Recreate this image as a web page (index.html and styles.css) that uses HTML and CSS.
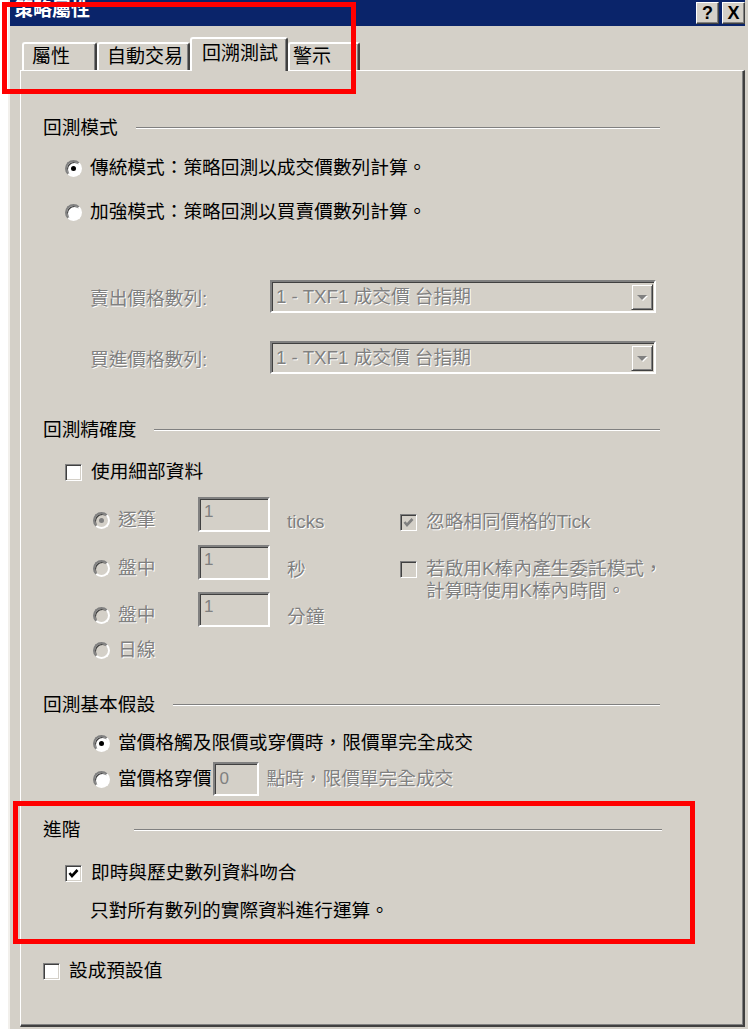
FILE: index.html
```html
<!DOCTYPE html>
<html lang="zh-Hant">
<head>
    <meta charset="UTF-8">
    <title>策略屬性</title>
    <link rel="stylesheet" href="styles.css">
</head>
<body>
    <div class="window">
        <div class="titlebar">
            <span class="title">策略屬性</span>
            <div class="caption-btns">
                <span class="cbtn">?</span>
                <span class="cbtn">X</span>
            </div>
        </div>

        <div class="tabs">
            <div class="tab tab-props">屬性</div>
            <div class="tab tab-auto">自動交易</div>
            <div class="tab tab-back active">回溯測試</div>
            <div class="tab tab-alert">警示</div>
        </div>

        <div class="panel">
            <!-- 回測模式 -->
            <div class="group-head">
                <span class="group-title">回測模式</span>
                <span class="rule"></span>
            </div>
            <div class="row lvl1 mt-16"><span class="radio on"></span><span>傳統模式：策略回測以成交價數列計算。</span></div>
            <div class="row lvl1 mt-20"><span class="radio"></span><span>加強模式：策略回測以買賣價數列計算。</span></div>

            <div class="combo-row mt-56">
                <span class="combo-label off">賣出價格數列:</span>
                <div class="combo"><span class="combo-text">1 - TXF1 成交價 台指期</span><span class="combo-btn"><i></i></span></div>
            </div>
            <div class="combo-row mt-28">
                <span class="combo-label off">買進價格數列:</span>
                <div class="combo"><span class="combo-text">1 - TXF1 成交價 台指期</span><span class="combo-btn"><i></i></span></div>
            </div>

            <!-- 回測精確度 -->
            <div class="group-head mt-44">
                <span class="group-title">回測精確度</span>
                <span class="rule"></span>
            </div>
            <div class="row lvl1 mt-18"><span class="check"></span><span>使用細部資料</span></div>

            <div class="detail mt-13">
                <div class="detail-left">
                    <div class="opt-row">
                        <span class="opt-label off"><span class="radio on disabled"></span>逐筆</span>
                        <span class="field">1</span>
                        <span class="unit off">ticks</span>
                    </div>
                    <div class="opt-row mt-13">
                        <span class="opt-label off"><span class="radio disabled"></span>盤中</span>
                        <span class="field">1</span>
                        <span class="unit off">秒</span>
                    </div>
                    <div class="opt-row mt-12">
                        <span class="opt-label off"><span class="radio disabled"></span>盤中</span>
                        <span class="field">1</span>
                        <span class="unit off">分鐘</span>
                    </div>
                    <div class="row mt-11 off"><span class="radio disabled"></span><span>日線</span></div>
                </div>
                <div class="detail-right">
                    <div class="row off"><span class="check on disabled"><svg viewBox="0 0 13 13"><polyline points="2.5,6 5,9 10.5,3"/></svg></span><span>忽略相同價格的Tick</span></div>
                    <div class="multi off">
                        <span class="check disabled"></span>
                        <span class="multi-text">若啟用K棒內產生委託模式，<br>計算時使用K棒內時間。</span>
                    </div>
                </div>
            </div>

            <!-- 回測基本假設 -->
            <div class="group-head mt-31">
                <span class="group-title">回測基本假設</span>
                <span class="rule"></span>
            </div>
            <div class="row lvl2 mt-14"><span class="radio on"></span><span>當價格觸及限價或穿價時，限價單完全成交</span></div>
            <div class="row tall lvl2 mt-7">
                <span class="radio"></span><span>當價格穿價</span><span class="field small">0</span><span class="off">點時，限價單完全成交</span>
            </div>

            <!-- 進階 -->
            <div class="group-head mt-22">
                <span class="group-title wide">進階</span>
                <span class="rule flush"></span>
            </div>
            <div class="row lvl1 mt-19"><span class="check on"><svg viewBox="0 0 13 13"><polyline points="2.5,6 5,9 10.5,3"/></svg></span><span>即時與歷史數列資料吻合</span></div>
            <div class="row note mt-14">只對所有數列的實際資料進行運算。</div>

            <div class="row mt-36"><span class="check"></span><span>設成預設值</span></div>
        </div>
    </div>

    <div class="mark mark-tabs"></div>
    <div class="mark mark-advanced"></div>
</body>
</html>
```

FILE: styles.css
```css
body {
    margin: 0;
    background: #fff;
    font-family: "Liberation Sans", "Noto Sans CJK TC", sans-serif;
    font-size: 18.7px;
    color: #000;
}
.window {
    width: 740px;
    height: 1029px;
    margin-left: 8px;
    padding-right: 3px;
    box-sizing: border-box;
    background: #d4d0c8;
    border-left: 2px solid #f2f0ec;
    overflow: hidden;
}

/* title bar */
.titlebar {
    height: 26px;
    background: #0a246a;
    display: flex;
    align-items: center;
    justify-content: space-between;
    padding-left: 4px;
}
.title {
    color: #fff;
    font-weight: bold;
    font-size: 19px;
    line-height: 20px;
    margin-top: -6px;
}
.caption-btns {
    display: flex;
    gap: 3px;
}
.cbtn {
    width: 21px;
    height: 20px;
    background: #d4d0c8;
    border: 1px solid;
    border-color: #fff #404040 #404040 #fff;
    box-shadow: inset -1px -1px #808080;
    font-weight: bold;
    font-size: 18px;
    line-height: 20px;
    text-align: center;
}

/* tabs */
.tabs {
    height: 44px;
    display: flex;
    align-items: flex-end;
    padding-left: 12px;
}
.tab {
    height: 28px;
    box-sizing: border-box;
    border-top: 2px solid #fff;
    border-left: 2px solid #fff;
    border-right: 2px solid #404040;
    box-shadow: inset -1px 0 #808080;
    border-radius: 3px 3px 0 0;
    padding-left: 8px;
    font-size: 19px;
    line-height: 26px;
}
.tab-props { width: 75px; }
.tab-auto { width: 93px; }
.tab-back { width: 98px; }
.tab-alert { width: 72px; padding-left: 3px; }
.tab.active {
    height: 34px;
    margin-bottom: -1px;
    position: relative;
    background: #d4d0c8;
    line-height: 30px;
    padding-left: 10px;
}

/* tab page */
.panel {
    margin-left: 10px;
    width: 725px;
    height: 957px;
    box-sizing: border-box;
    border-top: 1px solid #fff;
    border-left: 1px solid #fff;
    border-right: 2px solid #404040;
    border-bottom: 2px solid #404040;
    box-shadow: inset -1px -1px #808080;
    padding: 45px 83px 0 22px;
}
.group-head {
    display: flex;
    align-items: center;
    height: 24px;
    line-height: 24px;
}
.group-title { white-space: nowrap; }
.group-title.wide { min-width: 91px; }
.rule {
    flex: 1;
    margin-left: 18px;
    border-top: 1px solid #808080;
    border-bottom: 1px solid #fff;
}
.rule.flush { margin-left: 0; margin-right: -2px; }

.row {
    display: flex;
    align-items: center;
    height: 24px;
    line-height: 24px;
    white-space: nowrap;
}
.row.tall { height: 34px; }
.lvl1 { padding-left: 22px; }
.lvl2 { padding-left: 50px; }
.note { padding-left: 47px; }

.off {
    color: #808080;
    text-shadow: 1px 1px 0 #fff;
}

/* radio and check boxes */
.radio {
    width: 17px;
    height: 17px;
    box-sizing: border-box;
    flex: none;
    border-radius: 50%;
    border: 2px solid;
    border-color: #808080 #fff #fff #808080;
    background: #fff;
    box-shadow: inset 1px 1px #404040;
    margin-right: 8px;
    position: relative;
}
.radio.on::after {
    content: "";
    position: absolute;
    left: 4px;
    top: 4px;
    width: 5px;
    height: 5px;
    border-radius: 50%;
    background: #000;
}
.radio.disabled { background: #d4d0c8; }
.radio.disabled.on::after { background: #808080; }

.check {
    width: 17px;
    height: 17px;
    box-sizing: border-box;
    flex: none;
    border: 1px solid;
    border-color: #808080 #fff #fff #808080;
    box-shadow: inset 1px 1px #404040, inset -1px -1px #d4d0c8;
    background: #fff;
    margin-right: 9px;
    display: flex;
    align-items: center;
    justify-content: center;
}
.check svg {
    width: 13px;
    height: 13px;
}
.check polyline {
    fill: none;
    stroke: #000;
    stroke-width: 2.6;
}
.check.disabled { background: #d4d0c8; }
.check.disabled polyline { stroke: #808080; }

/* combo boxes */
.combo-row {
    display: flex;
    align-items: center;
    height: 33px;
    padding-left: 47px;
}
.combo-label {
    width: 180px;
    flex: none;
}
.combo {
    width: 386px;
    height: 33px;
    box-sizing: border-box;
    border: 2px solid;
    border-color: #808080 #fff #fff #808080;
    box-shadow: inset 1px 1px #404040;
    display: flex;
    align-items: center;
    justify-content: space-between;
    padding: 2px 1px 1px 4px;
}
.combo-text {
    color: #808080;
    text-shadow: 1px 1px 0 #fff;
    line-height: 24px;
}
.combo-btn {
    width: 22px;
    height: 26px;
    box-sizing: border-box;
    border: 1px solid;
    border-color: #d4d0c8 #404040 #404040 #d4d0c8;
    box-shadow: inset 1px 1px #fff, inset -1px -1px #808080;
    display: flex;
    align-items: center;
    justify-content: center;
}
.combo-btn i {
    width: 0;
    height: 0;
    border-left: 5px solid transparent;
    border-right: 5px solid transparent;
    border-top: 5px solid #808080;
    filter: drop-shadow(1px 1px 0 #fff);
}

/* detail options */
.detail {
    display: flex;
    padding-left: 50px;
}
.detail-left { width: 307px; flex: none; }
.detail-right { padding-top: 13px; }
.opt-row {
    display: flex;
    align-items: flex-start;
    height: 35px;
}
.opt-label {
    width: 105px;
    display: flex;
    align-items: center;
    height: 24px;
    line-height: 24px;
    margin-top: 11px;
}
.unit {
    margin-left: 17px;
    line-height: 24px;
    margin-top: 13px;
}
.field {
    width: 72px;
    height: 35px;
    box-sizing: border-box;
    border: 2px solid;
    border-color: #808080 #fff #fff #808080;
    box-shadow: inset 1px 1px #404040;
    color: #808080;
    font-size: 17px;
    line-height: 20px;
    padding: 3px 0 0 4px;
}
.field.small {
    width: 46px;
    height: 34px;
    margin: 0 7px 0 2px;
    line-height: 24px;
}
.multi {
    display: flex;
    align-items: flex-start;
    margin-top: 24px;
    line-height: 22px;
}
.multi-text { white-space: nowrap; }
.multi .check { margin-top: 3px; }

/* spacing */
.mt-7 { margin-top: 7px; }
.mt-11 { margin-top: 11px; }
.mt-12 { margin-top: 12px; }
.mt-13 { margin-top: 13px; }
.mt-14 { margin-top: 14px; }
.mt-16 { margin-top: 16px; }
.mt-18 { margin-top: 18px; }
.mt-19 { margin-top: 19px; }
.mt-20 { margin-top: 20px; }
.mt-22 { margin-top: 22px; }
.mt-28 { margin-top: 28px; }
.mt-31 { margin-top: 31px; }
.mt-36 { margin-top: 36px; }
.mt-44 { margin-top: 44px; }
.mt-56 { margin-top: 56px; }

/* red annotation boxes */
.mark {
    position: absolute;
    border: 5px solid #f00;
    box-sizing: border-box;
}
.mark-tabs {
    left: 2px;
    top: 2px;
    width: 354px;
    height: 92px;
}
.mark-advanced {
    left: 13px;
    top: 801px;
    width: 682px;
    height: 143px;
}
```
